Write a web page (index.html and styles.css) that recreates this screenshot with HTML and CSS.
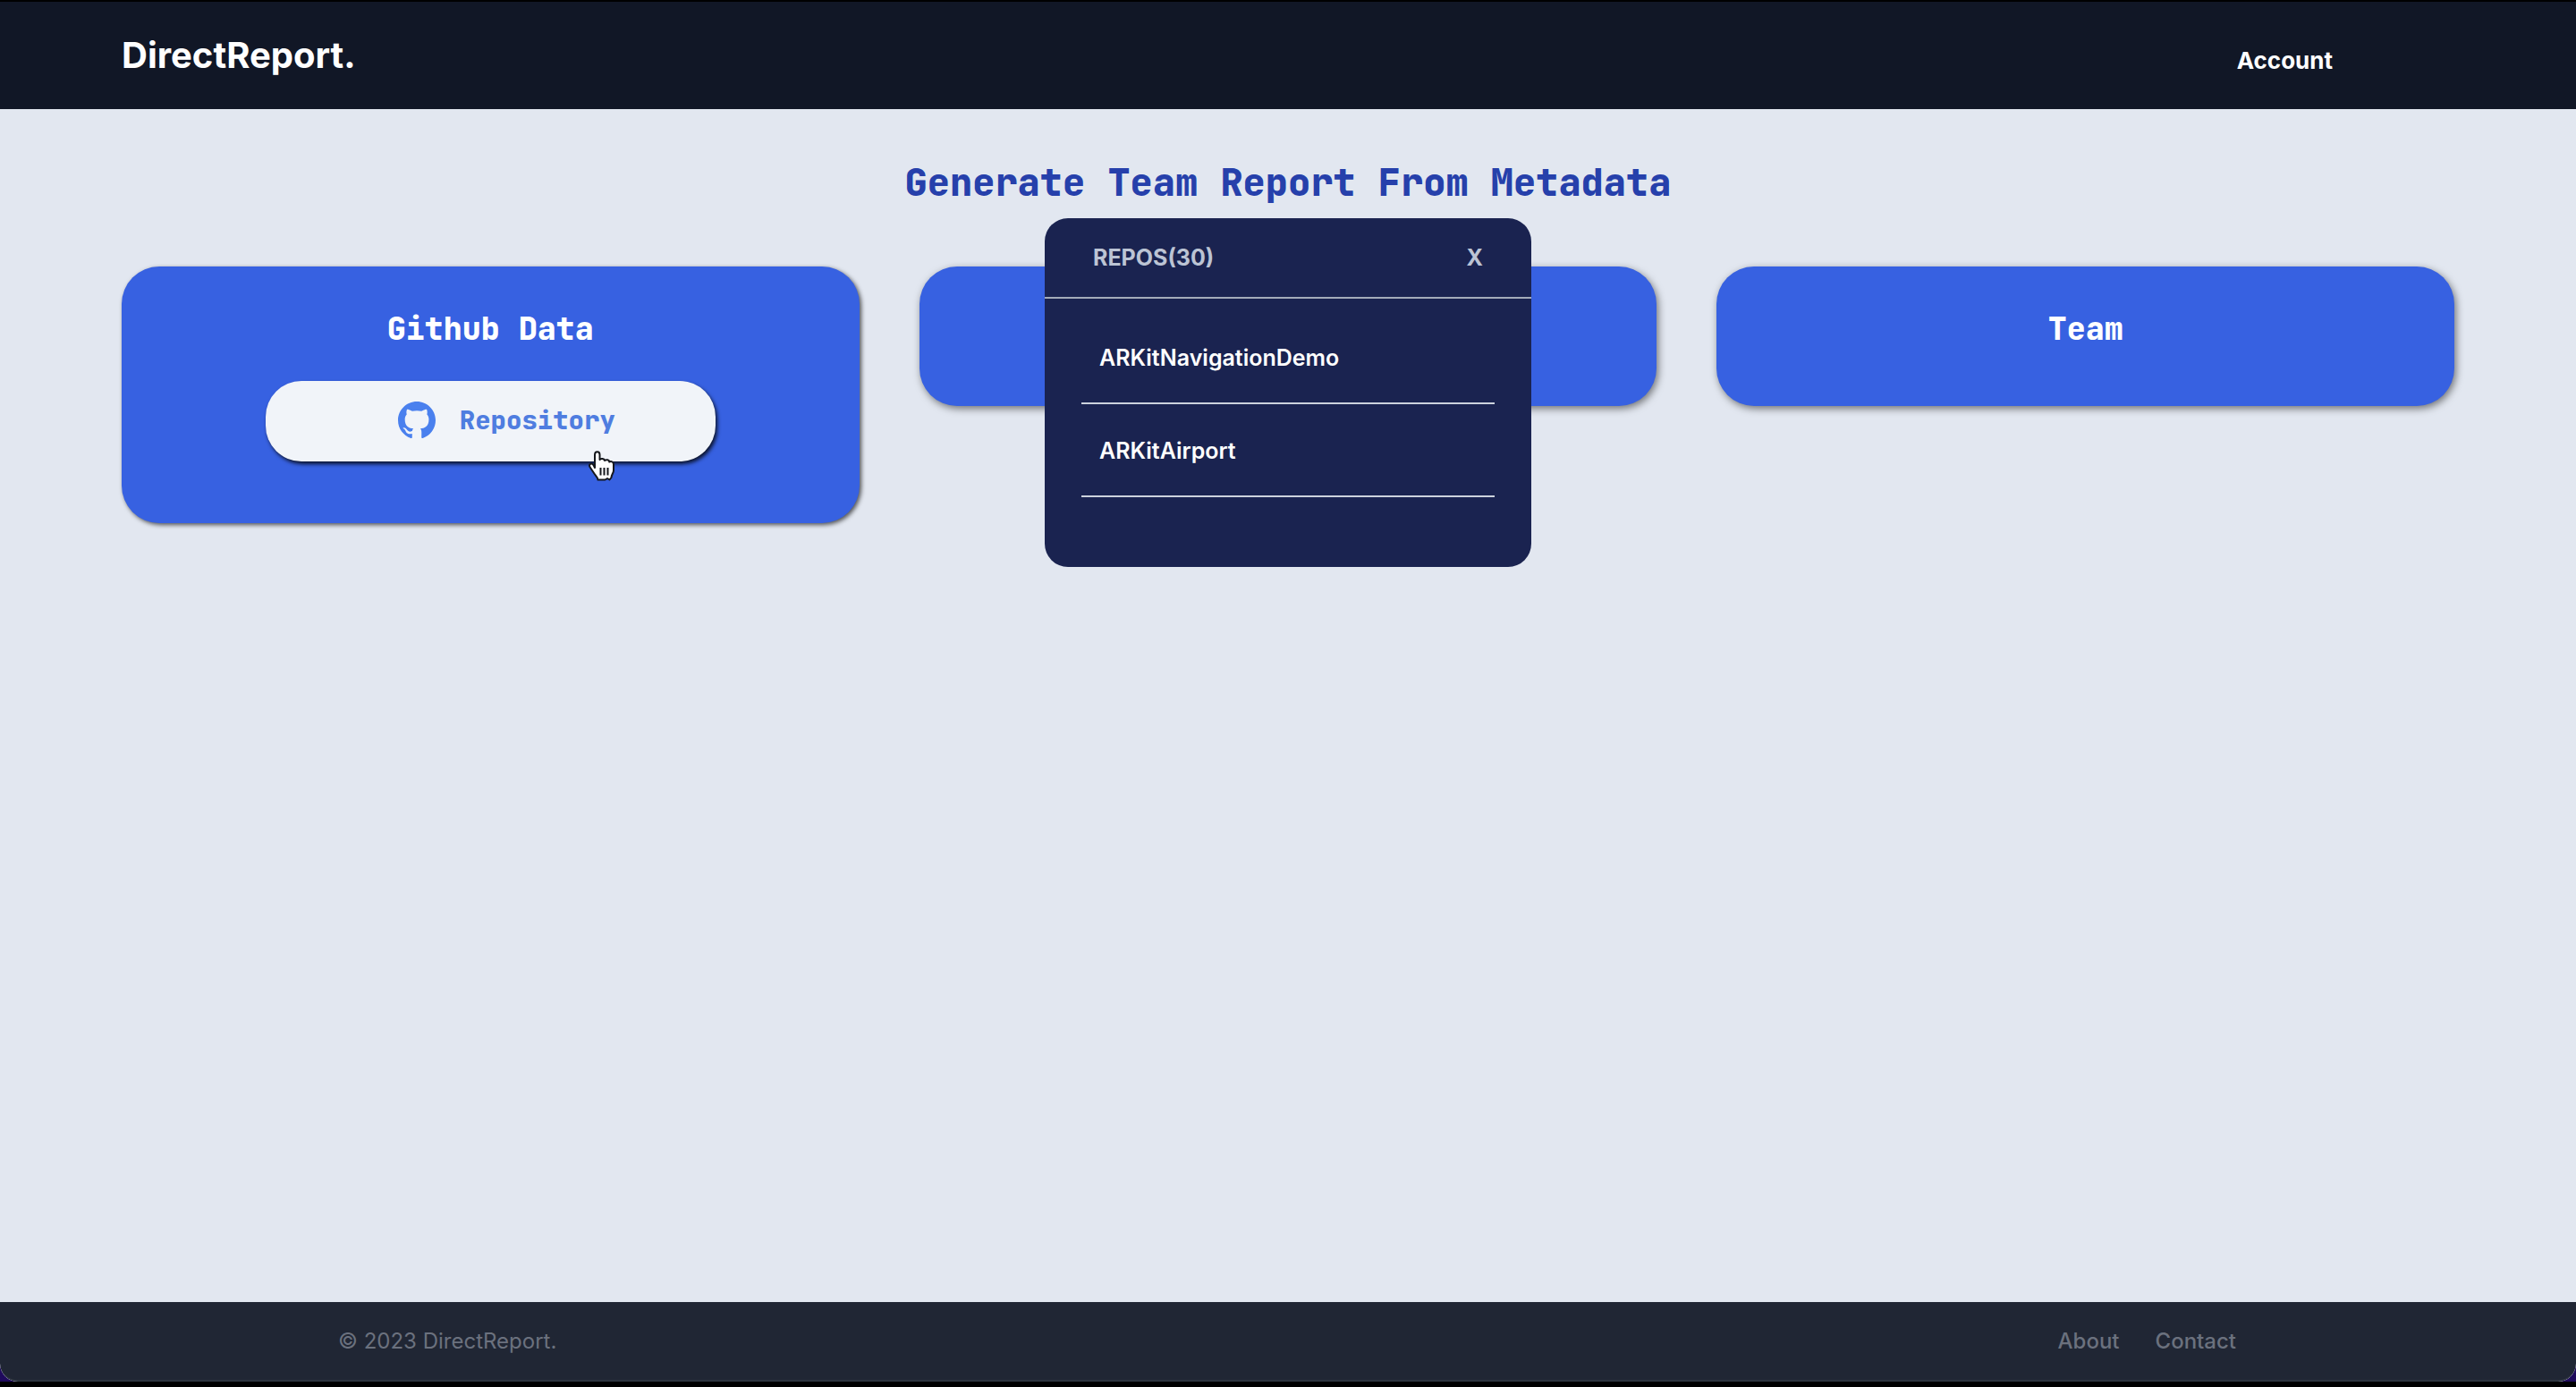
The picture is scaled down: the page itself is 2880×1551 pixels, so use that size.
FILE: index.html
```html
<!DOCTYPE html>
<html lang="en">
<head>
  <meta charset="utf-8">
  <meta name="viewport" content="width=device-width, initial-scale=1">
  <title>DirectReport.</title>
  <link rel="stylesheet" href="styles.css">
</head>
<body>
  <div class="backdrop">
    <div class="window">
      <header class="navbar">
        <a class="brand" href="#">DirectReport.</a>
        <nav><a class="nav-link" href="#">Account</a></nav>
      </header>

      <main class="content">
        <h1 class="title">Generate Team Report From Metadata</h1>

        <div class="cards">
          <section class="card card-active">
            <h2 class="card-title">Github Data</h2>
            <button class="repo-button" type="button">
              <svg class="github-icon" viewBox="0 0 16 16" aria-hidden="true"><path fill="currentColor" d="M8 0C3.58 0 0 3.58 0 8c0 3.54 2.29 6.53 5.47 7.59.4.07.55-.17.55-.38 0-.19-.01-.82-.01-1.49-2.01.37-2.53-.49-2.69-.94-.09-.23-.48-.94-.82-1.13-.28-.15-.68-.52-.01-.53.63-.01 1.08.58 1.23.82.72 1.21 1.87.87 2.33.66.07-.52.28-.87.51-1.07-1.78-.2-3.64-.89-3.64-3.95 0-.87.31-1.59.82-2.15-.08-.2-.36-1.02.08-2.12 0 0 .67-.21 2.2.82.64-.18 1.32-.27 2-.27s1.36.09 2 .27c1.53-1.04 2.2-.82 2.2-.82.44 1.1.16 1.92.08 2.12.51.56.82 1.27.82 2.15 0 3.07-1.87 3.75-3.65 3.95.29.25.54.73.54 1.48 0 1.07-.01 1.93-.01 2.2 0 .21.15.46.55.38A8.01 8.01 0 0 0 16 8c0-4.42-3.58-8-8-8z"/></svg>
              <span>Repository</span>
              <svg class="pointer" viewBox="0 0 32 36" aria-hidden="true"><path d="M8 20V5.500C8 1 13.500 1 13.500 5.500V11C15 9.500 18.500 9.800 19 12C21 10.500 24 11.200 24.300 13.500C26.500 12.500 29 13.500 29 16.500V23C29 26 26.500 27.500 26.500 31L24.500 33.500L22 32L19.500 33.500H11.500C11 30 8.500 28.500 7 26L3 20C0.500 16.500 4 14 6.500 17Z" fill="#fff" stroke="#15171c" stroke-width="2" stroke-linejoin="round"/><path d="M14.500 20V28.500M18.500 20V28.500M22.500 20V28.500" fill="none" stroke="#15171c" stroke-width="2"/></svg>
            </button>
          </section>
          <section class="card"></section>
          <section class="card">
            <h2 class="card-title">Team</h2>
          </section>
        </div>

        <div class="modal" role="dialog" aria-labelledby="repos-title">
          <div class="modal-header">
            <h2 class="modal-title" id="repos-title">REPOS(30)</h2>
            <button class="modal-close" type="button">X</button>
          </div>
          <ul class="repo-list">
            <li class="repo-item"><a class="repo-link" href="#">ARKitNavigationDemo</a></li>
            <li class="repo-item"><a class="repo-link" href="#">ARKitAirport</a></li>
          </ul>
        </div>
      </main>

      <footer class="footer">
        <p class="copyright">© 2023 DirectReport.</p>
        <nav class="footer-links">
          <a class="footer-link" href="#">About</a>
          <a class="footer-link" href="#">Contact</a>
        </nav>
      </footer>
    </div>
  </div>
</body>
</html>
```

FILE: styles.css
```css
*,
*::before,
*::after {
  box-sizing: border-box;
}

body {
  margin: 0;
  min-height: 100vh;
  display: flex;
  flex-direction: column;
  padding: 2px 0 6px;
  background: #000;
  font-family: Inter, "Liberation Sans", sans-serif;
}

h1,
h2,
p,
ul {
  margin: 0;
  padding: 0;
}

a {
  color: inherit;
  text-decoration: none;
}

button {
  border: 0;
  cursor: pointer;
}

.backdrop {
  flex: 1;
  display: flex;
  flex-direction: column;
  background: #1f0a5c;
}

.window {
  flex: 1;
  display: flex;
  flex-direction: column;
  border-radius: 0 0 20px 20px;
  background: #e2e7f0;
  overflow: hidden;
}

.navbar {
  display: flex;
  justify-content: space-between;
  height: 120px;
  padding: 36px 272px 0 136px;
  background: #111726;
  color: #fff;
}

.brand {
  font-size: 40px;
  font-weight: 700;
  line-height: 48px;
}

.nav-link {
  display: block;
  padding-top: 10px;
  font-size: 26px;
  font-weight: 700;
  line-height: 40px;
}

.content {
  position: relative;
  flex: 1;
  padding: 54px 136px;
}

.title,
.card-title,
.repo-button {
  font-family: "JetBrains Mono", "Liberation Mono", monospace;
  font-weight: 800;
}

.title {
  margin-bottom: 66px;
  color: #2640ab;
  font-size: 42px;
  line-height: 56px;
  text-align: center;
}

.cards {
  display: grid;
  grid-template-columns: repeat(3, 1fr);
  align-items: start;
  gap: 67px;
}

.card {
  display: flex;
  flex-direction: column;
  align-items: center;
  gap: 34px;
  min-height: 156px;
  padding: 46px 0 60px;
  border-radius: 42px;
  background: #3761e1;
  box-shadow: 2px 3px 8px rgba(0, 0, 0, 0.5);
}

.card-active {
  box-shadow: 2px 2px 5px rgba(0, 0, 0, 0.65);
}

.card-title {
  color: #fff;
  font-size: 35px;
  line-height: 48px;
}

.repo-button {
  position: relative;
  display: flex;
  align-items: center;
  justify-content: center;
  gap: 27px;
  width: 61%;
  height: 90px;
  margin-bottom: 9px;
  padding: 0 36px 3px 72px;
  border-radius: 40px;
  background: #f1f4f9;
  box-shadow: 2px 3px 4px rgba(0, 0, 0, 0.8);
  color: #4f7de0;
  font-size: 29px;
  line-height: 40px;
}

.github-icon {
  width: 42px;
  height: 42px;
  color: #4a80ee;
}

.pointer {
  position: absolute;
  right: 111px;
  bottom: -23px;
  width: 32px;
  height: 36px;
}

.modal {
  position: absolute;
  top: 122px;
  left: 50%;
  width: 544px;
  transform: translateX(-50%);
  border-radius: 26px;
  background: #1a2350;
}

.modal-header {
  display: flex;
  align-items: center;
  justify-content: space-between;
  height: 90px;
  padding: 0 54px;
  border-bottom: 2px solid #a3abba;
}

.modal-title,
.modal-close {
  padding: 0;
  background: none;
  color: #bcc4d4;
  font-family: inherit;
  font-size: 25px;
  font-weight: 700;
  line-height: 32px;
}

.repo-list {
  padding: 14px 41px 78px;
  list-style: none;
}

.repo-item {
  padding: 36px 20px 34px;
  border-bottom: 2px solid #ccd2dd;
}

.repo-link {
  display: block;
  color: #fff;
  font-size: 25px;
  font-weight: 600;
  line-height: 32px;
}

.footer {
  display: flex;
  align-items: center;
  justify-content: space-between;
  height: 89px;
  padding: 0 380px 0 378px;
  border-bottom: 2px solid #2e3540;
  border-radius: 0 0 20px 20px;
  background: #202634;
  color: #6b717e;
  font-size: 24px;
  line-height: 32px;
}

.footer-links {
  display: flex;
  gap: 40px;
  font-weight: 500;
}
```
